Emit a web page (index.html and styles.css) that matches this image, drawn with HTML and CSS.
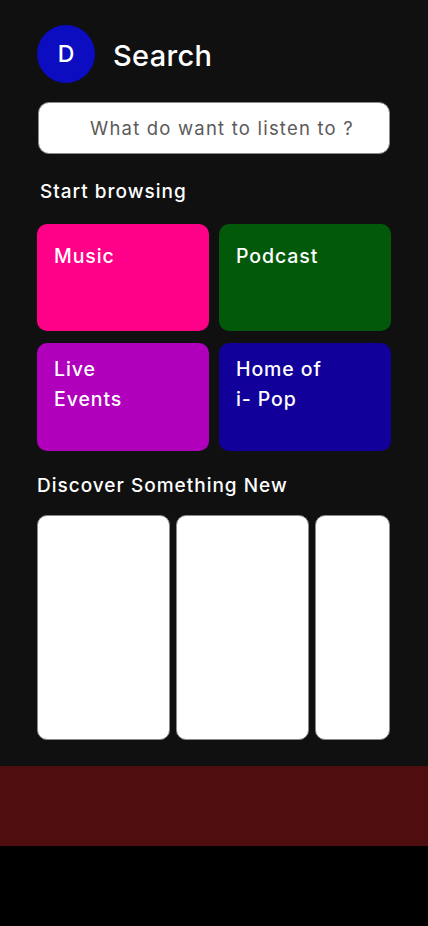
FILE: index.html
```html
<!DOCTYPE html>
<html lang="en">
<head>
<meta charset="utf-8">
<meta name="viewport" content="width=device-width, initial-scale=1">
<title>Search</title>
<link rel="stylesheet" href="styles.css">
</head>
<body>
<main class="page">
  <header class="header">
    <div class="avatar">D</div>
    <h1 class="title">Search</h1>
  </header>
  <div class="search">
    <input class="search-input" type="text" placeholder="What do want to listen to ?">
  </div>
  <h2 class="section-title browse-title">Start browsing</h2>
  <div class="grid">
    <div class="tile tile-music">Music</div>
    <div class="tile tile-podcast">Podcast</div>
    <div class="tile tile-live">Live<br>Events</div>
    <div class="tile tile-pop">Home of<br>i- Pop</div>
  </div>
  <h2 class="section-title discover-title">Discover Something New</h2>
  <div class="cards">
    <div class="card"></div>
    <div class="card"></div>
    <div class="card card-partial"></div>
  </div>
</main>
<div class="bottom-band"></div>
</body>
</html>
```
FILE: styles.css
```css
* { box-sizing: border-box; }
html, body {
  margin: 0;
  padding: 0;
  background: #000;
}
body {
  font-family: Inter, "Noto Sans", sans-serif;
  color: #fff;
}
.page {
  background: #101010;
  height: 766px;
  padding: 25px 37px 0 37px;
  overflow: hidden;
}
.header {
  display: flex;
  align-items: center;
  gap: 18px;
}
.avatar {
  width: 58px;
  height: 58px;
  border-radius: 50%;
  background: #0c0cc0;
  display: flex;
  align-items: center;
  justify-content: center;
  font-size: 23px;
  font-weight: 500;
}
.title {
  margin: 0;
  font-size: 29px;
  font-weight: 500;
  letter-spacing: 0.3px;
  padding-top: 3px;
}
.search {
  margin-top: 19px;
  padding-left: 1px;
  padding-right: 1px;
}
.search-input {
  display: block;
  width: 352px;
  height: 52px;
  border: 1px solid #8a8a8a;
  border-radius: 11px;
  background: #fff;
  padding: 0 0 0 51px;
  font-family: inherit;
  font-size: 18.5px;
  letter-spacing: 1.2px;
  color: #555;
  outline: none;
}
.search-input::placeholder {
  color: #5c5a5a;
}
.section-title {
  margin: 0;
  font-size: 19px;
  font-weight: 500;
  letter-spacing: 1px;
}
.browse-title {
  margin-top: 26px;
  margin-left: 3px;
  line-height: 24px;
}
.grid {
  margin-top: 20px;
  display: grid;
  grid-template-columns: 172px 172px;
  grid-template-rows: 107px 108px;
  column-gap: 10px;
  row-gap: 12px;
}
.tile {
  border-radius: 10px;
  padding: 17px 17px;
  font-size: 19.5px;
  font-weight: 500;
  letter-spacing: 0.9px;
  line-height: 30px;
}
.tile-music { background: #ff0088; }
.tile-podcast { background: #03590a; }
.tile-live { background: #b000bb; padding-top: 11px; }
.tile-pop { background: #12009a; padding-top: 11px; }
.discover-title {
  margin-top: 22px;
  line-height: 26px;
}
.cards {
  margin-top: 16px;
  display: flex;
  gap: 6px;
}
.card {
  width: 133px;
  height: 225px;
  background: #fff;
  border: 1px solid #8a8a8a;
  border-radius: 10px;
  flex: none;
}
.card-partial {
  width: 75px;
}
.bottom-band {
  height: 80px;
  background: #4f0d0f;
}
```
